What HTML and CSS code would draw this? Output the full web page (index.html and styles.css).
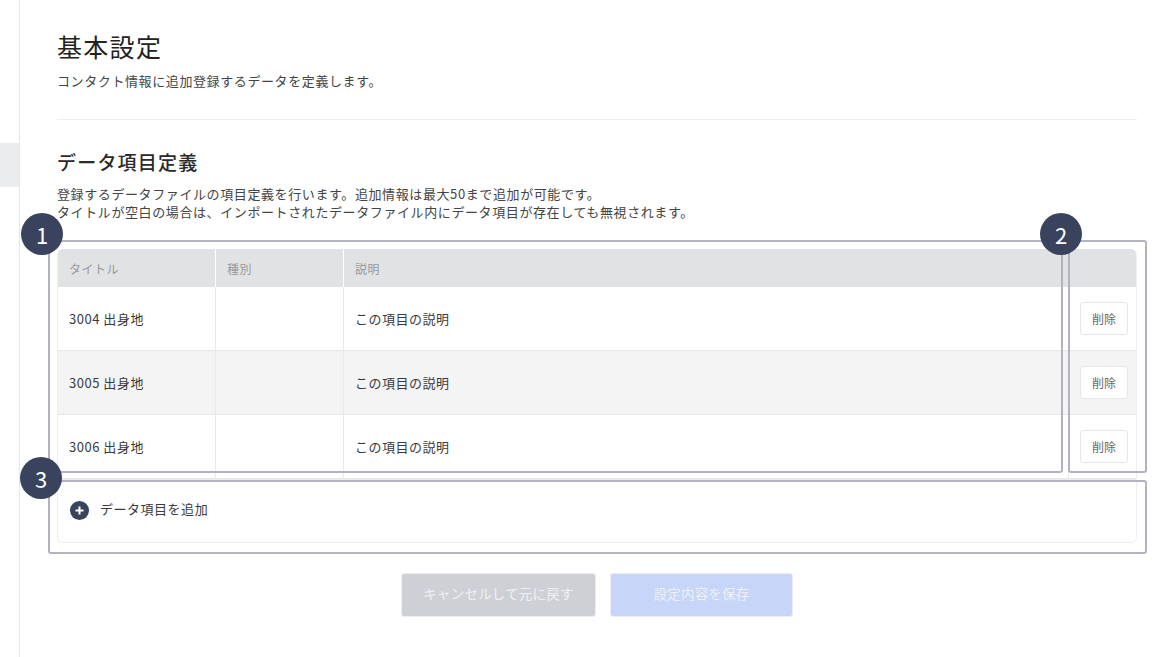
FILE: index.html
```html
<!DOCTYPE html>
<html lang="ja">
<head>
<meta charset="utf-8">
<title>基本設定</title>
<link rel="stylesheet" href="styles.css">
</head>
<body>
<div class="layout">
  <aside class="sidebar"><div class="side-active"></div></aside>
  <main class="main">
    <header class="head">
      <h1 class="title">基本設定</h1>
      <p class="lead">コンタクト情報に追加登録するデータを定義します。</p>
    </header>
    <section class="section">
      <h2 class="subtitle">データ項目定義</h2>
      <p class="desc">登録するデータファイルの項目定義を行います。追加情報は最大50まで追加が可能です。<br>タイトルが空白の場合は、インポートされたデータファイル内にデータ項目が存在しても無視されます。</p>
      <div class="editor">
        <div class="table">
          <div class="row row-head">
            <div class="cell c1">タイトル</div><div class="cell c2">種別</div><div class="cell c3">説明</div><div class="cell c4"></div>
          </div>
          <div class="row">
            <div class="cell c1">3004 出身地</div><div class="cell c2"></div><div class="cell c3">この項目の説明</div><div class="cell c4"><button class="del">削除</button></div>
          </div>
          <div class="row row-alt">
            <div class="cell c1">3005 出身地</div><div class="cell c2"></div><div class="cell c3">この項目の説明</div><div class="cell c4"><button class="del">削除</button></div>
          </div>
          <div class="row">
            <div class="cell c1">3006 出身地</div><div class="cell c2"></div><div class="cell c3">この項目の説明</div><div class="cell c4"><button class="del">削除</button></div>
          </div>
        </div>
        <div class="add">
          <svg class="plus" width="19" height="19" viewBox="0 0 19 19"><circle cx="9.5" cy="9.5" r="9.5" fill="#3a435e"/><path d="M9.5 5.5v8M5.5 9.5h8" stroke="#fff" stroke-width="2"/></svg>
          <span>データ項目を追加</span>
        </div>
        <div class="mark mark1"></div>
        <div class="mark mark2"></div>
        <div class="mark mark3"></div>
        <div class="badge badge1">1</div>
        <div class="badge badge2">2</div>
        <div class="badge badge3">3</div>
      </div>
      <div class="actions">
        <button class="btn btn-cancel">キャンセルして元に戻す</button>
        <button class="btn btn-save">設定内容を保存</button>
      </div>
    </section>
  </main>
</div>
</body>
</html>
```
FILE: styles.css
```css
* { box-sizing: border-box; }
html, body { margin: 0; height: 657px; overflow: hidden; background: #fff; }
body { font-family: "Noto Sans CJK JP", "Noto Sans", sans-serif; color: #3a3a3a; letter-spacing: .52px; }
.layout { display: flex; height: 657px; }
.sidebar { width: 20px; flex: none; border-right: 1px solid #e6e6e8; padding-top: 143px; }
.side-active { height: 44px; background: #ebecee; }
.main { width: 1117px; margin-left: 37px; flex: none; }
.head { padding-top: 29px; width: 1080px; height: 120px; border-bottom: 1px solid #eeeeef; }
.title { margin: 0; font-size: 25px; font-weight: 400; line-height: 34px; letter-spacing: 1.3px; color: #222; }
.lead { margin: 9px 0 0; font-size: 13px; line-height: 18px; letter-spacing: .6px; color: #444; }
.section { width: 1080px; }
.subtitle { margin: 29px 0 0; font-size: 19px; font-weight: 500; line-height: 26px; letter-spacing: 1.2px; color: #2a2a2a; }
.desc { margin: 10px 0 0; font-size: 13px; line-height: 18px; letter-spacing: .6px; color: #444; }
.editor { position: relative; margin-top: 28px; }
.table { height: 230px; overflow: hidden; border-radius: 6px 6px 0 0; border-right: 1px solid #eeeeef; border-left: 1px solid #eeeeef; }
.row { display: flex; height: 64px; border-bottom: 1px solid #e6e6e8; }
.row-alt { background: #f4f4f4; }
.row-head { height: 38px; background: #e1e2e4; border-bottom: 0; color: #999; }
.cell { display: flex; align-items: center; padding: 0 11px; font-size: 13px; color: inherit; border-right: 1px solid #e9e9eb; }
.row-head .cell { font-size: 12px; border-right: 1px solid #fff; }
.c1 { width: 158px; }
.c2 { width: 128px; }
.c3 { width: 725px; }
.c4 { flex: 1; justify-content: flex-end; padding: 0 8px 0 0; border-right: 0; }
.row-head .c4 { border-right: 0; }
.del { width: 48px; height: 33px; padding: 0; background: #fff; border: 1px solid #e6e6e8; border-radius: 3px; font: inherit; font-size: 12px; letter-spacing: 0; color: #666; }
.add { display: flex; align-items: center; gap: 11px; height: 64px; padding: 0 0 5px 12px; border: 1px solid #eeeeef; border-radius: 0 0 6px 6px; font-size: 13px; }
.plus { flex: none; margin-top: 3px; }
.mark { position: absolute; border: 2px solid #b2b3c2; border-radius: 3px; }
.mark1 { left: -9px; top: -9px; width: 1015px; height: 233px; }
.mark2 { left: 1011px; top: -9px; width: 79px; height: 233px; }
.mark3 { left: -9px; top: 231px; width: 1099px; height: 74px; }
.badge { position: absolute; width: 42px; height: 42px; border-radius: 50%; background: #3a435e; color: #fff; font-size: 22px; line-height: 42px; text-align: center; letter-spacing: 0; }
.badge1 { left: -36px; top: -36px; }
.badge2 { left: 983px; top: -36px; }
.badge3 { left: -37px; top: 208px; }
.actions { display: flex; justify-content: center; gap: 14px; margin-top: 30px; }
.btn { height: 44px; padding: 0 0 4px; border: 1px solid #eeeeef; border-radius: 3px; font: inherit; font-size: 13.5px; letter-spacing: .2px; color: #eef0f4; }
.btn-cancel { width: 195px; background: #cfd0d5; }
.btn-save { width: 183px; background: #c6d5f8; }
```
